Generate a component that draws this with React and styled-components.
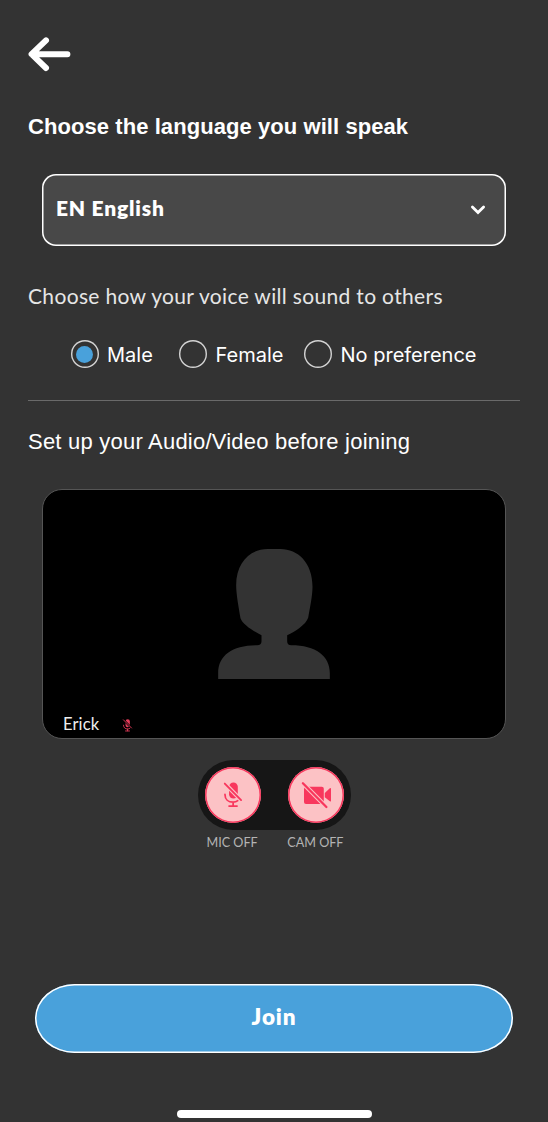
import styled, { createGlobalStyle } from "styled-components";
import { useState } from "react";

const VOICES = [
  { id: "male", label: "Male", width: 108.5 },
  { id: "female", label: "Female", width: 125 },
  { id: "none", label: "No preference", width: 180 },
];

/* icons */
function BackIcon() {
  return (
    <svg width="44" height="36" viewBox="0 0 44 36" fill="none" stroke="#fff" strokeWidth="6" strokeLinecap="round" strokeLinejoin="round">
      <path d="M18 4.4 L3.6 18.2 L18 32 M4 18.2 H39.4" />
    </svg>
  );
}

function ChevronIcon() {
  return (
    <svg width="16" height="12" viewBox="0 0 16 12" fill="none" stroke="#fff" strokeWidth="2.8" strokeLinecap="round">
      <path d="M2.4 3.9 L8 9.5 L13.6 3.9" />
    </svg>
  );
}

function PersonIcon() {
  return (
    <svg width="112" height="130" viewBox="85 57 335 390" fill="#333">
      <path d="M85 447 V430 C85 376 128 346 202 346 Q215 346 215 334 V316 C192 304 158 284 152 265 C147 236 139 192 139 166 C139 96 182 57 234 57 H272 C324 57 368 98 368 170 C368 196 360 236 355 263 C348 284 316 304 292 316 V334 Q292 346 304 346 C378 346 420 378 420 430 V447 Z" />
    </svg>
  );
}

function MicOffIcon({ size, color, slash }) {
  return (
    <svg width={size} height={(size * 26) / 18} viewBox="0 0 18 26" fill="none">
      <rect x="5.2" y="0.4" width="9" height="16.6" rx="4.5" fill={color} />
      <path d="M1 12.8 C1 17.6 4.4 20.8 9.4 20.8 C11.4 20.8 13 20.2 14.2 19.2 M9.4 20.8 V24.4 M5.2 24.8 H13.4" stroke={color} strokeWidth="1.8" strokeLinecap="round" />
      <path d="M0.8 1.6 L17.6 18.6" stroke={slash} strokeWidth="4.2" />
      <path d="M0.8 1.6 L17.6 18.6" stroke={color} strokeWidth="1.9" strokeLinecap="round" />
    </svg>
  );
}

function CamOffIcon() {
  return (
    <svg width="28" height="28" viewBox="0 0 28 28" fill="none">
      <rect x="2" y="5.7" width="19.8" height="17.4" rx="2" fill="#f8375d" />
      <path d="M22.8 12 L27.8 7.2 Q29 6.4 29 7.8 V19.6 Q29 21 27.8 20.2 L22.8 16.2 Z" fill="#f8375d" />
      <path d="M0.9 2.2 L24.4 26" stroke="#fcc2c5" strokeWidth="4.4" />
      <path d="M0.9 2.2 L24.4 26" stroke="#f8375d" strokeWidth="2.3" strokeLinecap="round" />
    </svg>
  );
}

/* pre-join screen */
function App() {
  const [voice, setVoice] = useState("male");

  return (
    <StPage>
      <GlobalStyle />
      <BackButton aria-label="Back">
        <BackIcon />
      </BackButton>
      <Title>Choose the language you will speak</Title>
      <LanguageSelect>
        <span>EN English</span>
        <ChevronIcon />
      </LanguageSelect>
      <VoiceTitle>Choose how your voice will sound to others</VoiceTitle>
      <VoiceOptions>
        {VOICES.map((item) => (
          <VoiceOption key={item.id} $width={item.width} onClick={() => setVoice(item.id)}>
            <Radio>{voice === item.id && <RadioDot />}</Radio>
            <VoiceLabel>{item.label}</VoiceLabel>
          </VoiceOption>
        ))}
      </VoiceOptions>
      <Divider />
      <SetupTitle>Set up your Audio/Video before joining</SetupTitle>
      <Preview>
        <PersonIcon />
        <NameTag>
          Erick
          <MicOffIcon size={8.7} color="#e83c5b" slash="#000" />
        </NameTag>
      </Preview>
      <Controls>
        <RoundButton aria-label="Microphone">
          <MicOffIcon size={17.5} color="#f8375d" slash="#fcc2c5" />
        </RoundButton>
        <RoundButton aria-label="Camera">
          <CamOffIcon />
        </RoundButton>
      </Controls>
      <ControlLabels>
        <span>MIC OFF</span>
        <span>CAM OFF</span>
      </ControlLabels>
      <JoinButton>Join</JoinButton>
      <HomeBar />
    </StPage>
  );
}

export default App;

const GlobalStyle = createGlobalStyle`
  body {
    margin: 0;
    background: #333;
  }
  * {
    box-sizing: border-box;
  }
  button {
    padding: 0;
    border: 0;
    background: none;
    color: inherit;
    cursor: pointer;
  }
  svg {
    display: block;
    flex-shrink: 0;
    overflow: visible;
  }
`;

const StPage = styled.main`
  display: flex;
  flex-direction: column;
  height: 1122px;
  padding: 36px 28px 4px;
  background: #333;
  color: #fff;
  white-space: nowrap;
  overflow: hidden;
`;

const BackButton = styled.button`
  align-self: flex-start;
  height: 36px;
`;

const Title = styled.h1`
  margin: 40px 0 0;
  font: bold 22px/30px "Liberation Sans", sans-serif;
  letter-spacing: 0.07px;
`;

const LanguageSelect = styled.button`
  display: flex;
  align-items: center;
  justify-content: space-between;
  height: 72px;
  margin: 32px 14px 0;
  padding: 0 20px 3px 14px;
  box-shadow: inset 0 0 0 1.5px #fff;
  border-radius: 14px;
  background: #484848;
  font: 800 21px/28px Lato, sans-serif;
  letter-spacing: 0.8px;

  span {
    padding-bottom: 2px;
  }
`;

const VoiceTitle = styled.h2`
  margin: 35px 0 0;
  color: #e6e6e6;
  font: 400 21px/30px Lato, sans-serif;
  letter-spacing: 0.33px;
`;

const VoiceOptions = styled.div`
  display: flex;
  margin: 29px 0 0 42.5px;
`;

const VoiceOption = styled.button`
  display: flex;
  align-items: center;
  gap: 8.5px;
  width: ${({ $width }) => $width}px;
  height: 28px;
  font: 400 20px/28px Inter, sans-serif;
`;

const VoiceLabel = styled.span`
  padding-top: 2px;
`;

const Radio = styled.span`
  display: flex;
  align-items: center;
  justify-content: center;
  flex: none;
  width: 28px;
  height: 28px;
  box-shadow: inset 0 0 0 1.4px #d4d4d4;
  border-radius: 50%;
`;

const RadioDot = styled.span`
  width: 17px;
  height: 17px;
  border-radius: 50%;
  background: #49a1db;
`;

const Divider = styled.hr`
  width: 100%;
  height: 1px;
  margin: 32px 0 0;
  border: 0;
  background: #6a6a6a;
`;

const SetupTitle = styled.h2`
  margin: 26px 0 0;
  font: 400 22px/30px "Liberation Sans", sans-serif;
  letter-spacing: 0.22px;
`;

const Preview = styled.section`
  display: flex;
  flex-direction: column;
  align-items: center;
  height: 250px;
  margin: 32px 14px 0;
  padding-top: 59px;
  border: 1px solid #555;
  border-radius: 20px;
  background: #000;
`;

const NameTag = styled.div`
  display: flex;
  align-items: center;
  gap: 24px;
  align-self: flex-start;
  margin: 33px 0 0 20px;
  color: #eee;
  font: 400 16.5px/24px Lato, sans-serif;
  letter-spacing: 0.15px;

  svg {
    margin-top: 2px;
  }
`;

const Controls = styled.div`
  display: flex;
  align-items: center;
  justify-content: space-between;
  align-self: center;
  width: 153px;
  height: 70px;
  margin: 21px 0 0 1px;
  padding: 0 7px;
  border-radius: 35px;
  background: #161616;
`;

const RoundButton = styled.button`
  display: flex;
  align-items: center;
  justify-content: center;
  width: 56px;
  height: 56px;
  && {
    background: #fcc2c5;
  }
  box-shadow: inset 0 0 0 1.5px #f8375d;
  border-radius: 50%;
`;

const ControlLabels = styled.div`
  display: flex;
  justify-content: space-between;
  align-self: center;
  width: 137px;
  margin: 4px 0 0 2px;
  color: #b4b4b4;
  font: 400 12.6px/18px Lato, sans-serif;
`;

const JoinButton = styled.button`
  height: 69px;
  margin: 132px 7px 0;
  padding-bottom: 4px;
  && {
    background: #49a1db;
  }
  box-shadow: inset 0 0 0 1.5px #fff;
  border-radius: 40px / 35px;
  font: 800 22.5px/30px Lato, sans-serif;
  letter-spacing: 0.9px;
`;

const HomeBar = styled.div`
  align-self: center;
  width: 195px;
  height: 8px;
  margin-top: auto;
  border-radius: 4px;
  background: #fff;
`;
